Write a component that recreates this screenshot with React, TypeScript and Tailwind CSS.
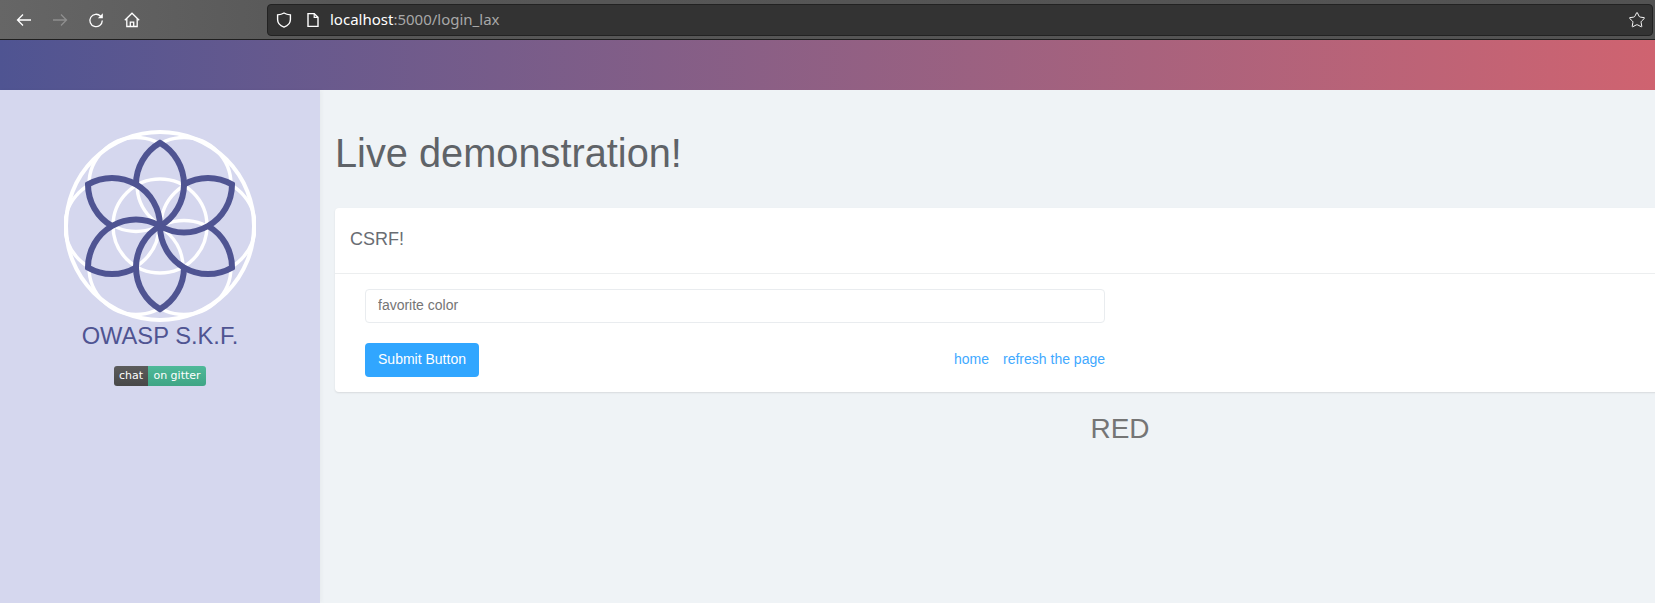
import { Star } from 'lucide-react';

const PETALS = [0, 60, 120, 180, 240, 300];
const RINGS = [
  [0, 0],
  [48, 0],
  [24, 41.57],
  [-24, 41.57],
  [-48, 0],
  [-24, -41.57],
  [24, -41.57],
];

// Logo: siedem bialych okregow i szesc platkow w ukladzie wiatraczka
function Logo() {
  return (
    <svg width="192" height="192" viewBox="-96 -96 192 192" className="block">
      <g fill="none" stroke="#ffffff" strokeWidth="3.4">
        <circle cx="0" cy="0" r="94" strokeWidth="4" />
        {RINGS.map(([x, y]) => (
          <circle key={`${x}-${y}`} cx={x} cy={y} r="47" />
        ))}
      </g>
      <g fill="none" stroke="#4f5492" strokeWidth="6" strokeLinejoin="miter" strokeMiterlimit="3">
        {PETALS.map((angle) => (
          <path
            key={angle}
            transform={`rotate(${angle})`}
            d="M-24 -41.57 A48 48 0 0 1 0 -83.14 A48 48 0 0 1 0 0"
          />
        ))}
      </g>
    </svg>
  );
}

function ChromeIcon({ children, className }: { children: React.ReactNode; className?: string }) {
  return (
    <svg width="16" height="16" viewBox="0 0 16 16" fill="none" stroke="currentColor" strokeWidth="1.3" className={className}>
      {children}
    </svg>
  );
}

function BrowserBar() {
  return (
    <div className="h-10 shrink-0 flex items-center bg-gradient-to-r from-[#666666] via-[#575757] via-20% to-[#525252] border-b border-[#1f1f1f] text-white">
      <div className="w-[267px] shrink-0 flex items-center pl-[6px]">
        <div className="w-9 flex justify-center">
          <ChromeIcon>
            <path d="M15 8H1.5M7 2.5 1.5 8 7 13.5" />
          </ChromeIcon>
        </div>
        <div className="w-9 flex justify-center">
          <ChromeIcon className="text-[#8f8f8f]">
            <path d="M1 8H14.5M9 2.5 14.5 8 9 13.5" />
          </ChromeIcon>
        </div>
        <div className="w-9 flex justify-center">
          <ChromeIcon>
            <path d="M12.6 4.2A6.2 6.2 0 1 0 14.3 8.6" />
            <path d="M14.8 1.2V6.2H9.8Z" fill="currentColor" stroke="none" />
          </ChromeIcon>
        </div>
        <div className="w-9 flex justify-center">
          <ChromeIcon>
            <path d="M.8 8.2 8 1.2l7.2 7" />
            <path d="M2.8 6.5V14.5H13.2V6.5" />
            <path d="M6.3 14.5V10.2H9.7V14.5" />
          </ChromeIcon>
        </div>
      </div>
      <div className="flex-1 h-8 mr-[2px] flex items-center rounded bg-[#333333] border border-[#222222] pl-[8px] pr-[6px] font-['Noto_Sans',sans-serif] text-[15px]">
        <ChromeIcon>
          <path d="M8 1C10 2.2 12.4 2.7 14.4 2.9V7.5C14.4 11 11.6 13.8 8 15.1 4.4 13.8 1.6 11 1.6 7.5V2.9C3.6 2.7 6 2.2 8 1Z" strokeWidth="1.4" />
        </ChromeIcon>
        <ChromeIcon className="ml-[13px]">
          <path d="M3 1.6H9.2L13 5.4V14.4H3Z" strokeWidth="1.4" />
          <path d="M9.2 1.6V5.4H13" strokeWidth="1.2" />
        </ChromeIcon>
        <span className="ml-[9px]">localhost</span>
        <span className="text-[#a8a8a8]">:5000/login_lax</span>
        <Star size={18} strokeWidth={1.3} className="ml-auto" />
      </div>
    </div>
  );
}

export default function App() {
  return (
    <div className="w-[1655px] h-[603px] overflow-hidden flex flex-col bg-[#eff3f6] font-['Liberation_Sans',Arial,sans-serif]">
      <BrowserBar />
      <div className="h-[50px] shrink-0 bg-gradient-to-r from-[#4f5492] to-[#cf6370]" />

      <div className="flex-1 flex min-h-0">
        {/* Sidebar */}
        <aside className="w-[320px] shrink-0 bg-[#d5d7ee] flex flex-col items-center pt-[40px] shadow-[2px_0_4px_rgba(0,0,0,0.03)]">
          <Logo />
          <div className="mt-[-2px] text-[23.7px] leading-[32px] text-[#4f5492]">OWASP S.K.F.</div>
          <div className="mt-[14px] h-5 flex rounded-[3px] overflow-hidden font-['DejaVu_Sans',sans-serif] text-[11px] leading-5 text-white">
            <span className="w-[34px] text-center bg-gradient-to-b from-[#5c5c5c] to-[#484848]">chat</span>
            <span className="w-[58px] text-center bg-gradient-to-b from-[#4fb999] to-[#3fa585]">on gitter</span>
          </div>
        </aside>

        {/* Tresc */}
        <main className="w-[1600px] shrink-0 pl-[15px] pr-[15px]">
          <h1 className="mt-[39px] text-[39.75px] leading-[48px] font-normal text-[#5f6368]">Live demonstration!</h1>

          <section className="mt-[31px] bg-white rounded-[4px] shadow-[0_1px_2px_rgba(0,0,0,0.1)]">
            <div className="h-[66px] pl-[15px] pb-[2px] flex items-center border-b border-[#eceeef] text-[18px] text-[#696d73]">
              CSRF!
            </div>
            <div className="pl-[30px] pt-[15px] pb-[15px] w-[770px]">
              <input
                placeholder="favorite color"
                className="block w-full h-[34px] px-[12px] pb-[2px] rounded-[4px] border border-[#e9ecef] bg-white text-sm placeholder:text-[#757575] outline-none"
              />
              <div className="mt-[20px] flex items-center justify-between">
                <button className="w-[114px] h-[34px] pb-[2px] rounded-[4px] bg-[#31a6ff] text-sm text-white">Submit Button</button>
                <div className="flex gap-[14px] pb-[2px] text-sm text-[#3fa9ff]">
                  <a>home</a>
                  <a>refresh the page</a>
                </div>
              </div>
            </div>
          </section>

          <div className="mt-[19px] text-center text-[28px] leading-[36px] text-[#757575]">RED</div>
        </main>
      </div>
    </div>
  );
}
